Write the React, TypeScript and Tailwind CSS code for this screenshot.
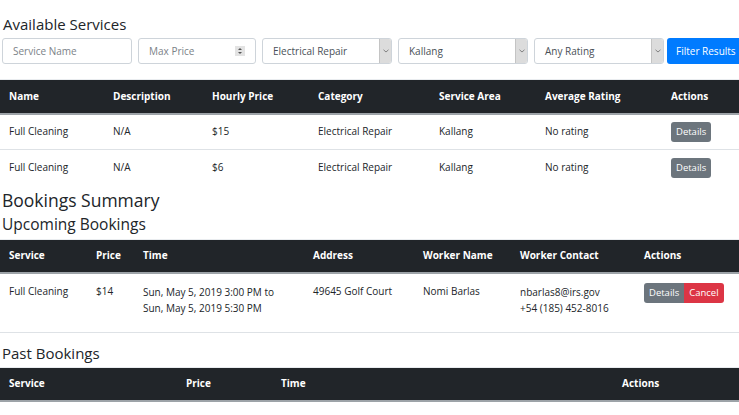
import React from 'react';

const font = { fontFamily: '"Open Sans", "Noto Sans", sans-serif' };

function Select({ label }: { label: string }) {
    return (
        <div className="flex h-[26px] w-[130px] shrink-0 items-stretch overflow-hidden rounded-[3px] border border-[#ced4da] bg-white">
            <span className="flex flex-1 items-center pl-[10px] text-[10px] text-[#495057]">
                {label}
            </span>
            <span className="flex w-[12px] items-center justify-center border-l border-[#c4c4c4] bg-[#dcdcdc]">
                <svg width="6" height="4" viewBox="0 0 6 4">
                    <path d="M0.5 0.8 L3 3 L5.5 0.8" fill="none" stroke="#777" strokeWidth="0.9" />
                </svg>
            </span>
        </div>
    );
}

function Head({ cols, widths }: { cols: string[]; widths: number[] }) {
    return (
        <>
            <colgroup>
                {widths.map((w, i) => (
                    <col key={i} style={{ width: w }} />
                ))}
            </colgroup>
            <thead>
                <tr className="h-[34px] bg-[#212529] text-white">
                    {cols.map((c) => (
                        <th
                            key={c}
                            className="border-t border-b-2 border-t-[#e9ecef] border-b-[#9da3a8] pl-[9px] text-left align-middle text-[10px] font-bold"
                        >
                            {c}
                        </th>
                    ))}
                </tr>
            </thead>
        </>
    );
}

function Btn({ children, color }: { children: React.ReactNode; color: string }) {
    return (
        <span className={`inline-flex h-[20px] items-center px-[5px] text-[9.5px] text-white ${color}`}>
            {children}
        </span>
    );
}

const services = [
    { price: '$15' },
    { price: '$6' },
];

export default function App() {
    return (
        <div className="w-[739px] bg-white text-[#212529]" style={font}>
            <h2 className="pl-[3px] pt-[13px] text-[15px] leading-[22px]">Available Services</h2>
            <div className="mt-[3px] flex items-center gap-[6px] pl-[2px]">
                <div className="flex h-[26px] w-[130px] shrink-0 items-center rounded-[3px] border border-[#ced4da] pl-[10px] text-[10px] text-[#7b8288]">
                    Service Name
                </div>
                <div className="flex h-[26px] w-[118px] shrink-0 items-center justify-between rounded-[3px] border border-[#ced4da] px-[10px] text-[10px] text-[#7b8288]">
                    Max Price
                    <span className="flex h-[10px] w-[10px] flex-col items-center justify-center gap-[1px] bg-[#e3e3e3]">
                        <svg width="6" height="8" viewBox="0 0 6 8">
                            <path d="M1 3 L3 1 L5 3 Z M1 5 L3 7 L5 5 Z" fill="#555" />
                        </svg>
                    </span>
                </div>
                <Select label="Electrical Repair" />
                <Select label="Kallang" />
                <Select label="Any Rating" />
                <button className="-ml-[3px] h-[26px] shrink-0 rounded-l-[3px] bg-[#007bff] px-[9px] text-[10px] text-white">
                    Filter Results
                </button>
            </div>

            <table className="mt-[15px] w-[739px] table-fixed border-collapse">
                <Head
                    cols={['Name', 'Description', 'Hourly Price', 'Category', 'Service Area', 'Average Rating', 'Actions']}
                    widths={[104, 99, 106, 121, 106, 126, 77]}
                />
                <tbody className="text-[10px]">
                    {services.map((s, i) => (
                        <tr key={i} className="h-[36px] border-b border-[#dee2e6] last:border-b-0">
                            <td className="pl-[9px]">Full Cleaning</td>
                            <td className="pl-[9px]">N/A</td>
                            <td className="pl-[9px]">{s.price}</td>
                            <td className="pl-[9px]">Electrical Repair</td>
                            <td className="pl-[9px]">Kallang</td>
                            <td className="pl-[9px]">No rating</td>
                            <td className="pl-[9px]">
                                <span className="inline-flex h-[20px] items-center rounded-[3px] bg-[#6c757d] px-[5px] text-[9.5px] text-white">
                                    Details
                                </span>
                            </td>
                        </tr>
                    ))}
                </tbody>
            </table>

            <h2 className="pl-[2px] pt-[2px] text-[17.5px] leading-[25px]">Bookings Summary</h2>
            <h3 className="pl-[2px] text-[15.5px] leading-[22px]">Upcoming Bookings</h3>
            <table className="mt-[4px] w-[739px] table-fixed border-collapse">
                <Head
                    cols={['Service', 'Price', 'Time', 'Address', 'Worker Name', 'Worker Contact', 'Actions']}
                    widths={[87, 47, 170, 110, 97, 124, 104]}
                />
                <tbody className="text-[10px]">
                    <tr className="h-[59px] border-b border-[#dee2e6] align-top">
                        <td className="pl-[9px] pt-[10px]">Full Cleaning</td>
                        <td className="pl-[9px] pt-[10px]">$14</td>
                        <td className="pl-[9px] pt-[10px] leading-[16px]">
                            Sun, May 5, 2019 3:00 PM to
                            <br />
                            Sun, May 5, 2019 5:30 PM
                        </td>
                        <td className="pl-[9px] pt-[10px]">49645 Golf Court</td>
                        <td className="pl-[9px] pt-[10px]">Nomi Barlas</td>
                        <td className="pl-[9px] pt-[10px] leading-[16px]">
                            nbarlas8@irs.gov
                            <br />
                            +54 (185) 452-8016
                        </td>
                        <td className="pl-[9px] pt-[9px]">
                            <span className="inline-flex overflow-hidden rounded-[3px]">
                                <Btn color="bg-[#6c757d]">Details</Btn>
                                <Btn color="bg-[#dc3545]">Cancel</Btn>
                            </span>
                        </td>
                    </tr>
                </tbody>
            </table>

            <h3 className="pl-[2px] pt-[9px] text-[15px] leading-[22px]">Past Bookings</h3>
            <table className="mt-[3px] w-[739px] table-fixed border-collapse">
                <Head cols={['Service', 'Price', 'Time', 'Actions']} widths={[177, 95, 341, 126]} />
            </table>
        </div>
    );
}
